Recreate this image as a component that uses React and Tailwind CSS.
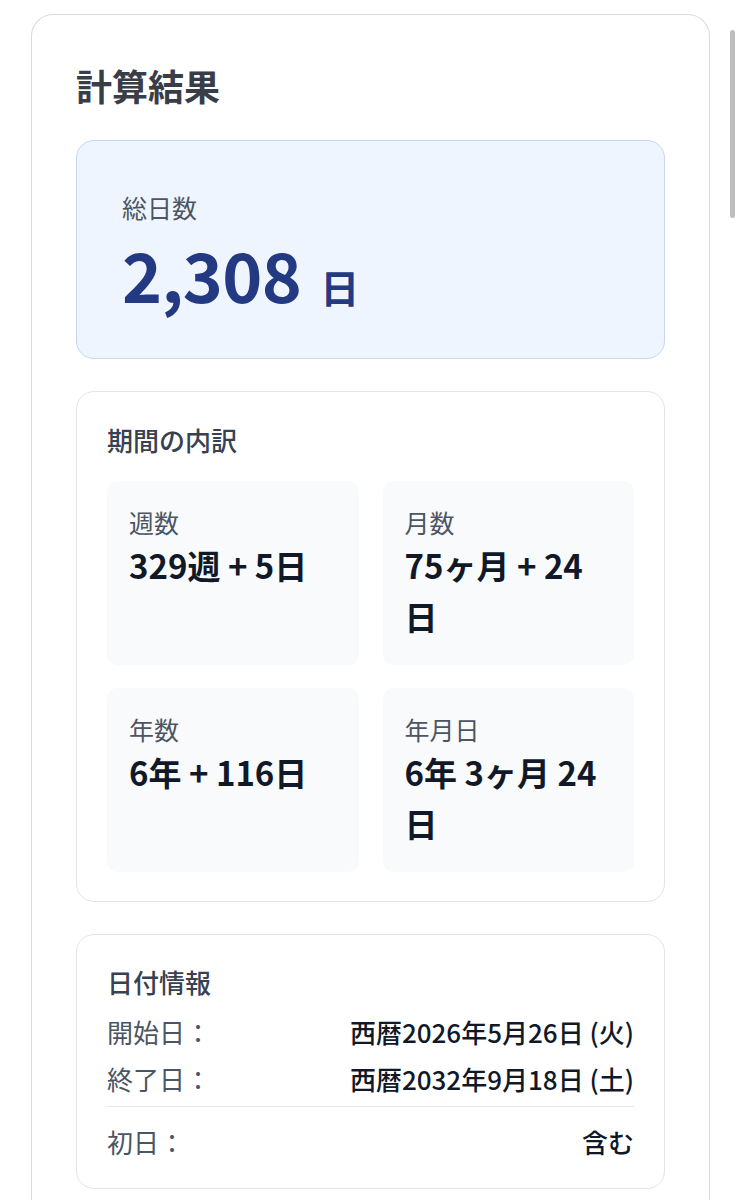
export default function App() {
  const cells = [
    { label: "週数", value: "329週 + 5日" },
    { label: "月数", value: "75ヶ月 + 24日" },
    { label: "年数", value: "6年 + 116日" },
    { label: "年月日", value: "6年 3ヶ月 24日" },
  ];
  return (
    <div className="min-h-[1200px] bg-white px-[31px] pt-[14px] font-['Noto_Sans_CJK_JP','Noto_Sans',sans-serif]">
      <div className="rounded-t-[22px] border-[1.5px] border-b-0 border-[#d7dae1] px-[44px] pt-[46px] pb-[40px]">
        <h2 className="text-[36px] font-bold leading-[48px] text-[#383d48]">計算結果</h2>

        <div className="mt-[31px] rounded-[18px] border border-[#c5d7f1] bg-[#eff5fe] px-[45px] pt-[48px] pb-[49px]">
          <div className="text-[25px] leading-[36px] text-[#4b5563]">総日数</div>
          <div className="mt-[14px] flex h-[70px] items-baseline text-[#233a83]">
            <span className="text-[68px] font-bold leading-[70px] tracking-[-0.01em]">2,308</span>
            <span className="ml-[19px] text-[39px] font-bold leading-[70px]">日</span>
          </div>
        </div>

        <div className="mt-[32px] rounded-[18px] border border-[#e2e4e8] px-[30px] pt-[30px] pb-[29px]">
          <div className="text-[26px] font-medium leading-[36px] text-[#374151]">期間の内訳</div>
          <div className="mt-[23px] grid grid-cols-2 gap-x-[24px] gap-y-[23px]">
            {cells.map((c) => (
              <div key={c.label} className="rounded-[10px] bg-[#f9fafb] pl-[22px] pr-[26px] pt-[23px] pb-[23px]">
                <div className="text-[25px] leading-[36px] text-[#4b5563]">{c.label}</div>
                <div className="min-h-[102px] text-[33px] font-bold leading-[51px] text-[#111827]">{c.value}</div>
              </div>
            ))}
          </div>
        </div>

        <div className="mt-[32px] rounded-[18px] border border-[#e2e4e8] px-[30px] pt-[29px] pb-[28px]">
          <div className="text-[26px] font-medium leading-[36px] text-[#374151]">日付情報</div>
          <div className="mt-[14px] flex justify-between text-[26px] leading-[36px]">
            <span className="text-[#4b5563]">開始日：</span>
            <span className="font-medium text-[#111827]">西暦2026年5月26日 (火)</span>
          </div>
          <div className="mt-[11px] flex justify-between text-[26px] leading-[36px]">
            <span className="text-[#4b5563]">終了日：</span>
            <span className="font-medium text-[#111827]">西暦2032年9月18日 (土)</span>
          </div>
          <div className="mt-[9px] flex justify-between border-t border-[#e5e7eb] pt-[17px] text-[26px] leading-[36px]">
            <span className="text-[#4b5563]">初日：</span>
            <span className="font-medium text-[#111827]">含む</span>
          </div>
        </div>
      </div>
      <div className="pointer-events-none fixed right-[6px] top-[30px] h-[188px] w-[5px] rounded-full bg-[#bdbdbd]" />
    </div>
  );
}
